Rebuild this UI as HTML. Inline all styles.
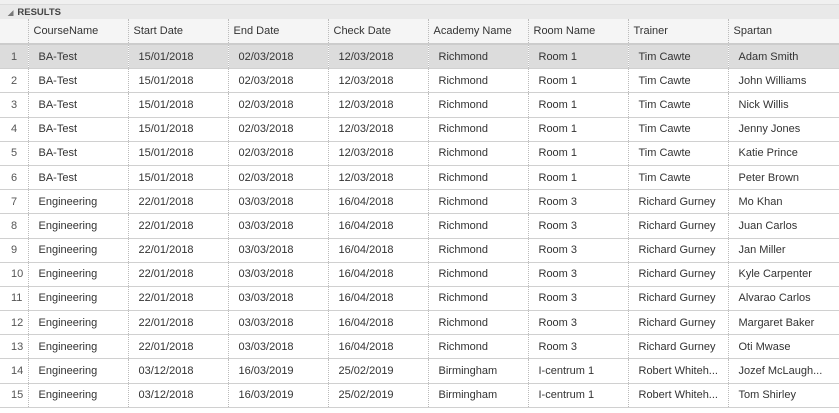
<!DOCTYPE html><html><head><style>
body{margin:0;width:839px;height:413px;overflow:hidden;background:#fff;font-family:"Liberation Sans",sans-serif;font-size:11px;color:#333}
.top{height:4px;background:#f0f0f0;border-bottom:1px solid #ddd}
.res{height:14px;background:#e9e9e9;font-size:9.5px;font-weight:bold;color:#444;line-height:15px;padding-left:8px}
.res span{font-size:7px;color:#777;margin-right:4px}
table{border-collapse:collapse;table-layout:fixed;width:839px}
th{background:#f5f5f5;font-weight:normal;text-align:left;height:24px;padding:0 0 0 5px;border-left:1px dotted #bbb;border-bottom:2px solid #ccc;color:#333;white-space:nowrap}
td{height:23.2px;padding:0 0 0 10px;border-left:1px dotted #bbb;border-bottom:1px solid #d0d0d0;white-space:nowrap;overflow:hidden}
td:first-child,th:first-child{border-left:none;padding-left:11px;color:#555}
tr.sel td,tr.sel td:first-child{background:#dcdcdc}
</style></head><body>
<div class="top"></div>
<div class="res"><span>◢</span>RESULTS</div>
<table>
<colgroup><col style="width:28px"><col style="width:100px"><col style="width:100px"><col style="width:100px"><col style="width:100px"><col style="width:100px"><col style="width:100px"><col style="width:100px"><col style="width:111px"></colgroup>
<tr><th></th><th>CourseName</th><th>Start Date</th><th>End Date</th><th>Check Date</th><th>Academy Name</th><th>Room Name</th><th>Trainer</th><th>Spartan</th></tr>
<tr class="sel"><td>1</td><td>BA-Test</td><td>15/01/2018</td><td>02/03/2018</td><td>12/03/2018</td><td>Richmond</td><td>Room 1</td><td>Tim Cawte</td><td>Adam Smith</td></tr>
<tr><td>2</td><td>BA-Test</td><td>15/01/2018</td><td>02/03/2018</td><td>12/03/2018</td><td>Richmond</td><td>Room 1</td><td>Tim Cawte</td><td>John Williams</td></tr>
<tr><td>3</td><td>BA-Test</td><td>15/01/2018</td><td>02/03/2018</td><td>12/03/2018</td><td>Richmond</td><td>Room 1</td><td>Tim Cawte</td><td>Nick Willis</td></tr>
<tr><td>4</td><td>BA-Test</td><td>15/01/2018</td><td>02/03/2018</td><td>12/03/2018</td><td>Richmond</td><td>Room 1</td><td>Tim Cawte</td><td>Jenny Jones</td></tr>
<tr><td>5</td><td>BA-Test</td><td>15/01/2018</td><td>02/03/2018</td><td>12/03/2018</td><td>Richmond</td><td>Room 1</td><td>Tim Cawte</td><td>Katie Prince</td></tr>
<tr><td>6</td><td>BA-Test</td><td>15/01/2018</td><td>02/03/2018</td><td>12/03/2018</td><td>Richmond</td><td>Room 1</td><td>Tim Cawte</td><td>Peter Brown</td></tr>
<tr><td>7</td><td>Engineering</td><td>22/01/2018</td><td>03/03/2018</td><td>16/04/2018</td><td>Richmond</td><td>Room 3</td><td>Richard Gurney</td><td>Mo Khan</td></tr>
<tr><td>8</td><td>Engineering</td><td>22/01/2018</td><td>03/03/2018</td><td>16/04/2018</td><td>Richmond</td><td>Room 3</td><td>Richard Gurney</td><td>Juan Carlos</td></tr>
<tr><td>9</td><td>Engineering</td><td>22/01/2018</td><td>03/03/2018</td><td>16/04/2018</td><td>Richmond</td><td>Room 3</td><td>Richard Gurney</td><td>Jan Miller</td></tr>
<tr><td>10</td><td>Engineering</td><td>22/01/2018</td><td>03/03/2018</td><td>16/04/2018</td><td>Richmond</td><td>Room 3</td><td>Richard Gurney</td><td>Kyle Carpenter</td></tr>
<tr><td>11</td><td>Engineering</td><td>22/01/2018</td><td>03/03/2018</td><td>16/04/2018</td><td>Richmond</td><td>Room 3</td><td>Richard Gurney</td><td>Alvarao Carlos</td></tr>
<tr><td>12</td><td>Engineering</td><td>22/01/2018</td><td>03/03/2018</td><td>16/04/2018</td><td>Richmond</td><td>Room 3</td><td>Richard Gurney</td><td>Margaret Baker</td></tr>
<tr><td>13</td><td>Engineering</td><td>22/01/2018</td><td>03/03/2018</td><td>16/04/2018</td><td>Richmond</td><td>Room 3</td><td>Richard Gurney</td><td>Oti Mwase</td></tr>
<tr><td>14</td><td>Engineering</td><td>03/12/2018</td><td>16/03/2019</td><td>25/02/2019</td><td>Birmingham</td><td>I-centrum 1</td><td>Robert Whiteh...</td><td>Jozef McLaugh...</td></tr>
<tr><td>15</td><td>Engineering</td><td>03/12/2018</td><td>16/03/2019</td><td>25/02/2019</td><td>Birmingham</td><td>I-centrum 1</td><td>Robert Whiteh...</td><td>Tom Shirley</td></tr>
</table>
</body></html>
